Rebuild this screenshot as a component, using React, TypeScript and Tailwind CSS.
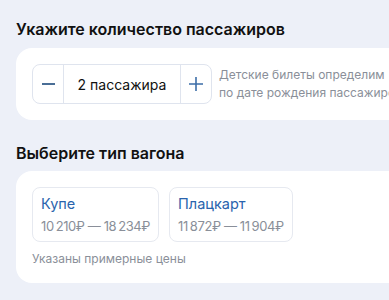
export default function App() {
  const wagons = [
    { name: 'Купе', price: '10\u2009210₽ — 18\u2009234₽' },
    { name: 'Плацкарт', price: '11\u2009872₽ — 11\u2009904₽' },
  ];

  return (
    <div className="h-[300px] w-[389px] overflow-hidden bg-[#edf0f8] font-['Inter',sans-serif] text-[#111]">
      {/* Passengers */}
      <div className="pl-4 pt-[19px]">
        <h2 className="text-[16px] font-semibold leading-[20px] whitespace-nowrap">Укажите количество пассажиров</h2>
        <div className="mt-[9px] flex h-[72px] w-[400px] items-center gap-[7px] rounded-l-2xl bg-white pl-4">
          <div className="flex h-10 w-[180px] shrink-0 overflow-hidden rounded-lg border border-[#dfe4ee]">
            <button className="flex w-[31px] items-center justify-center border-r border-[#dfe4ee]">
              <span className="block h-[2px] w-[13px] bg-[#4a6e96]" />
            </button>
            <div className="flex flex-1 items-center justify-center text-[14px]">2 пассажира</div>
            <button className="flex w-[31px] items-center justify-center border-l border-[#dfe4ee]">
              <svg width="14" height="14" viewBox="0 0 14 14" stroke="#3d6ea8" strokeWidth="1.6">
                <path d="M7 0v14M0 7h14" />
              </svg>
            </button>
          </div>
          <p className="whitespace-nowrap text-[12px] leading-[18px] text-[#8a8f99]">
            Детские билеты определим
            <br />
            по дате рождения пассажиров
          </p>
        </div>
      </div>

      {/* Wagon type */}
      <div className="pl-4 pt-[23px]">
        <h2 className="text-[16px] font-semibold leading-[20px]">Выберите тип вагона</h2>
        <div className="mt-[8px] h-[112px] w-[400px] rounded-l-2xl bg-white pl-4 pt-4">
          <div className="flex gap-[10px]">
            {wagons.map((w) => (
              <div key={w.name} className="rounded-lg border border-[#e6e9f0] px-2 pt-[6px] pb-[5px]">
                <div className="text-[14.5px] leading-5 text-[#2a64ad]">{w.name}</div>
                <div className="mt-[2px] whitespace-nowrap text-[13px] leading-5 tracking-[-0.4px] text-[#8a8f99]">{w.price}</div>
              </div>
            ))}
          </div>
          <p className="mt-[9px] text-[12px] leading-4 text-[#8a8f99]">Указаны примерные цены</p>
        </div>
      </div>
    </div>
  );
}
